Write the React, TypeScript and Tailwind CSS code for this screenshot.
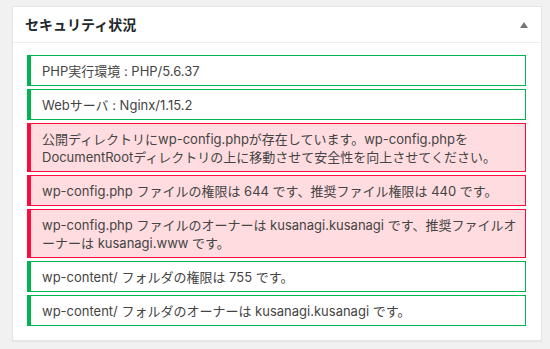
const items: { ok: boolean; text: string }[] = [
  { ok: true, text: "PHP実行環境 : PHP/5.6.37" },
  { ok: true, text: "Webサーバ : Nginx/1.15.2" },
  {
    ok: false,
    text: "公開ディレクトリにwp-config.phpが存在しています。wp-config.phpをDocumentRootディレクトリの上に移動させて安全性を向上させてください。",
  },
  { ok: false, text: "wp-config.php ファイルの権限は 644 です、推奨ファイル権限は 440 です。" },
  {
    ok: false,
    text: "wp-config.php ファイルのオーナーは kusanagi.kusanagi です、推奨ファイルオーナーは kusanagi.www です。",
  },
  { ok: true, text: "wp-content/ フォルダの権限は 755 です。" },
  { ok: true, text: "wp-content/ フォルダのオーナーは kusanagi.kusanagi です。" },
];

export default function App() {
  return (
    <div
      lang="ja"
      className="w-[550px] h-[349px] bg-[#f1f1f1] pt-[6px] pl-[12px] text-[#23282d]"
      style={{ fontFamily: '"Inter", "Noto Sans CJK JP", sans-serif' }}
    >
      <div className="w-[530px] bg-white border border-[#e5e5e5] shadow-[0_1px_1px_rgba(0,0,0,0.04)]">
        {/* ヘッダー */}
        <div className="h-[36px] flex items-center justify-between pl-[12px] pr-[13px] border-b border-[#eeeeee]">
          <h2 className="text-[14px] font-bold text-[#23282d]">セキュリティ状況</h2>
          <span className="w-0 h-0 border-l-[4px] border-r-[4px] border-b-[6px] border-l-transparent border-r-transparent border-b-[#72777c]" />
        </div>

        {/* ステータス一覧 */}
        <div className="pt-[12px] pb-[14px] pl-[14px] pr-[15px] flex flex-col gap-[3px]">
          {items.map((item, i) => (
            <div
              key={i}
              className={
                item.ok
                  ? "border border-l-[4px] border-[#00b550] bg-white pl-[11px] pr-[4px] pt-[6px] pb-[5px] text-[13px] leading-[18px] text-[#444] [line-break:loose]"
                  : "border border-l-[4px] border-[#ff0a3c] bg-[#ffdcdf] pl-[11px] pr-[4px] pt-[6px] pb-[5px] text-[13px] leading-[18px] text-[#444] [line-break:loose]"
              }
            >
              {item.text}
            </div>
          ))}
        </div>
      </div>
    </div>
  );
}
